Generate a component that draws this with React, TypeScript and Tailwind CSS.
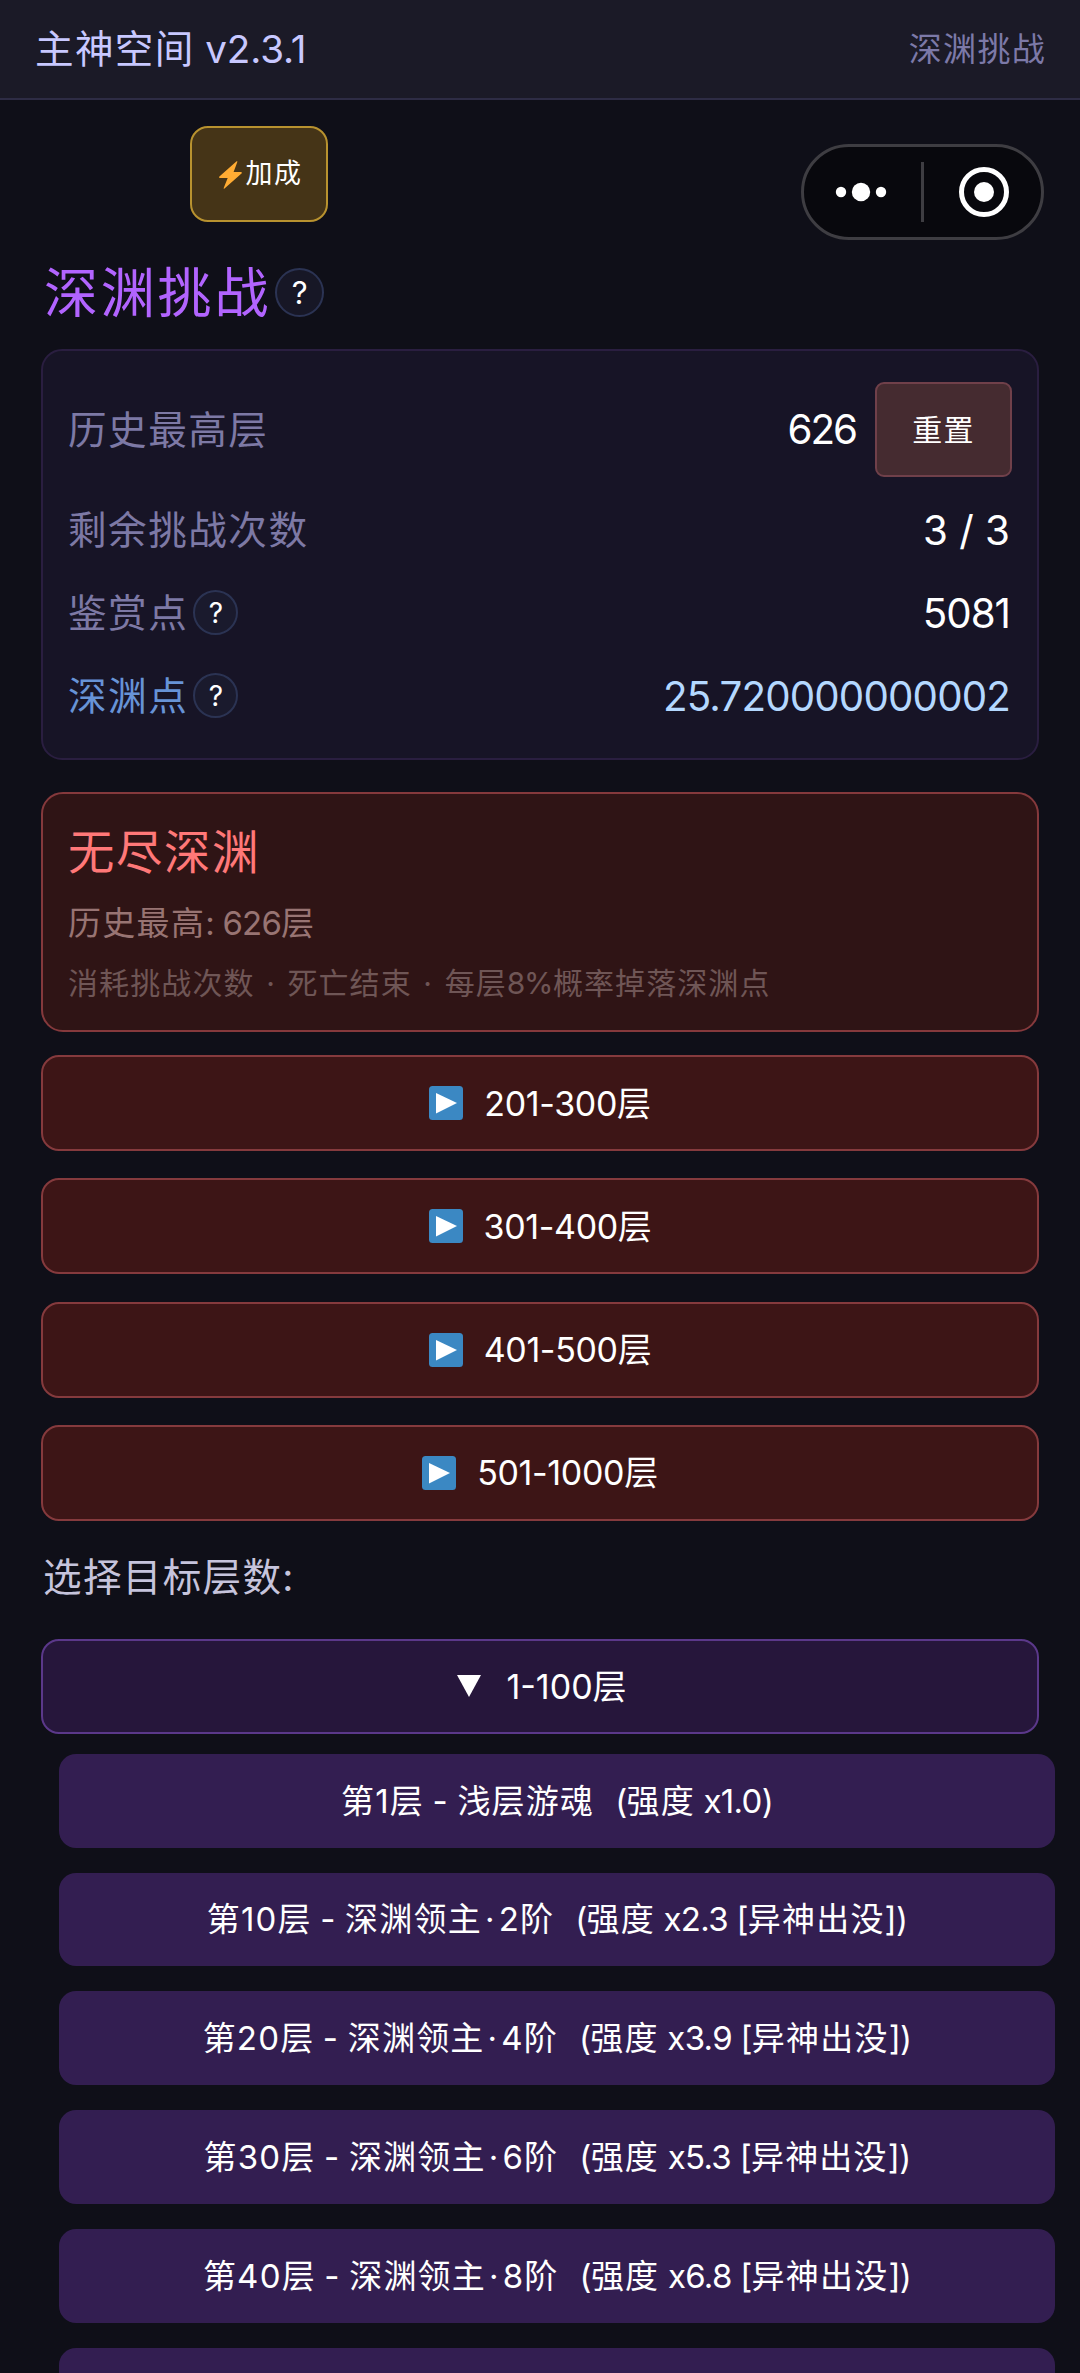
import type { ReactNode } from "react";

const endlessRanges = ["201-300", "301-400", "401-500", "501-1000"];

const floors = [
  { floor: "1", boss: "浅层游魂", rank: "", power: "x1.0", event: "" },
  { floor: "10", boss: "深渊领主", rank: "2阶", power: "x2.3", event: "异神出没" },
  { floor: "20", boss: "深渊领主", rank: "4阶", power: "x3.9", event: "异神出没" },
  { floor: "30", boss: "深渊领主", rank: "6阶", power: "x5.3", event: "异神出没" },
  { floor: "40", boss: "深渊领主", rank: "8阶", power: "x6.8", event: "异神出没" },
];

function Help() {
  return (
    <button className="ml-[5px] flex size-[45px] items-center justify-center rounded-full border-2 border-[#2b3353] bg-[#1a1a2d] pl-[2px] text-[28px] leading-none text-white">
      ?
    </button>
  );
}

type StatRowProps = { label: string; children: ReactNode; help?: boolean; tone?: string };

function StatRow({ label, children, help, tone = "text-white" }: StatRowProps) {
  return (
    <div className="flex h-[60px] items-center justify-between">
      <div className="flex items-center text-[38.6px] tracking-[1.5px]">
        <span className="pt-px">{label}</span>
        {help && <Help />}
      </div>
      <div className={`pt-[2px] pr-[2px] text-[40.3px] ${tone}`}>{children}</div>
    </div>
  );
}

function Bolt() {
  return (
    <svg viewBox="0 0 23 28" className="h-[28px] w-[23px]" fill="#ffac33">
      <path d="M17.6 0.3c.5-.4 1 0 .8.5L14.6 11h7.3c1 0 1.300 .9.6 1.600L5.500 27.500c-.6.5-1.100.1-.8-.5L8.700 17H1c-1 0-1.300-.9-.6-1.600z" />
    </svg>
  );
}

function PlayIcon() {
  return (
    <svg viewBox="0 0 34 34" className="size-[34px]">
      <rect width="34" height="34" rx="3.500" fill="#3b88c3" />
      <path d="M7 7l21 10L7 27.500z" fill="#fff" />
    </svg>
  );
}

function Capsule() {
  return (
    <div className="absolute top-[144px] left-[801px] flex h-24 w-[243px] items-center rounded-full border-[3px] border-[#3e3d42] bg-[#08080d]">
      <svg viewBox="0 0 237 90" className="h-[90px] w-[237px]">
        <circle cx="37" cy="45" r="5.200" fill="#fff" />
        <circle cx="57" cy="45" r="9.200" fill="#fff" />
        <circle cx="77" cy="45" r="5.200" fill="#fff" />
        <rect x="117" y="15" width="3" height="60" fill="#3e3d42" />
        <circle cx="180" cy="45" r="22.500" fill="none" stroke="#fff" strokeWidth="5" />
        <circle cx="180" cy="45" r="10" fill="#fff" />
      </svg>
    </div>
  );
}

export default function App() {
  return (
    <div className="relative h-[2373px] w-[1080px] overflow-hidden bg-[#0f0f18] font-['Inter','Noto_Sans_CJK_SC',sans-serif] whitespace-nowrap">
      <header className="flex h-[100px] items-center justify-between border-b-2 border-[#2e2c45] bg-[#1b1a27] pt-[2px] pr-[34px] pl-[35px]">
        <h1 className="text-[38.6px] tracking-[1.3px] text-[#c8c8ff]">
          主神空间<span className="tracking-[-0.1px]"> v2.3.1</span>
        </h1>
        <span className="text-[33px] tracking-[1.3px] text-[#7c79a8]">深渊挑战</span>
      </header>
      <Capsule />

      <main className="px-[41px]">
        <button className="mt-[26px] ml-[149px] flex h-24 w-[138px] items-center justify-center gap-[3px] rounded-[18px] border-2 border-[#b8922f] bg-[#453417] pt-px pl-1 text-[27px] tracking-[1.6px] text-white">
          <Bolt />
          <span>加成</span>
        </button>

        <div className="mt-[42px] flex h-14 items-center pl-[3px]">
          <h2 className="pt-[4px] text-[54px] leading-none tracking-[2.8px] text-[#b264ff]">深渊挑战</h2>
          <button className="ml-[4px] flex size-[49px] items-center justify-center rounded-full border-2 border-[#2b3353] bg-[#171726] text-[31px] leading-none text-white">
            ?
          </button>
        </div>

        <section className="mt-[29px] flex h-[411px] flex-col gap-[23px] rounded-[21px] border-2 border-[#2a1e40] bg-[#171426] px-[25px] pt-[31px] text-[#7d79a5]">
          <div className="flex h-[95px] items-center justify-between">
            <span className="pt-[2px] text-[38.6px] tracking-[1.5px]">历史最高层</span>
            <div className="flex items-center gap-[19px]">
              <span className="pt-[2px] text-[40.3px] tracking-[-2px] text-white">626</span>
              <button className="h-[95px] w-[137px] rounded-[9px] border-2 border-[#70404a] bg-[#452b30] pt-px text-[30px] tracking-[1.3px] text-white">
                重置
              </button>
            </div>
          </div>
          <StatRow label="剩余挑战次数">3 / 3</StatRow>
          <StatRow label="鉴赏点" help>
            <span className="tracking-[-1px]">5081</span>
          </StatRow>
          <div className="text-[#6793d6]">
            <StatRow label="深渊点" help tone="text-[#b4d8ff]">
              <span className="tracking-[-0.85px]">25.720000000002</span>
            </StatRow>
          </div>
        </section>

        <section className="mt-8 flex h-[240px] flex-col rounded-[22px] border-2 border-[#85393c] bg-[#2f1415] px-[25px]">
          <h3 className="mt-[30px] h-[56px] text-[46.4px] leading-[56px] tracking-[1.6px] text-[#ff7878]">
            无尽深渊
          </h3>
          <p className="mt-[21px] h-[44px] text-[33px] leading-[44px] tracking-[1.3px] text-[#987473]">
            历史最高<span className="tracking-[-0.8px]">: 626</span>层
          </p>
          <p className="mt-[18px] h-[40px] text-[30px] leading-[40px] tracking-[1.1px] text-[#6f5656]">
            <span className="[word-spacing:2px]">消耗挑战次数 · 死亡结束 · 每层</span>
            <span className="tracking-[-1.5px]">8%</span>
            <span className="ml-px">概率掉落深渊点</span>
          </p>
        </section>

        <div className="mt-[23px] flex flex-col gap-[27.3px]">
          {endlessRanges.map((range) => (
            <button
              key={range}
              className="flex h-24 items-center justify-center gap-[21px] rounded-[18px] border-2 border-[#853a3d] bg-[#3d1516] text-white"
            >
              <PlayIcon />
              <span className="text-[34px] tracking-[-0.35px]">{range}层</span>
            </button>
          ))}
        </div>

        <p className="mt-[28px] h-[56px] pl-[2px] text-[38.6px] leading-[56px] tracking-[1.3px] text-[#c6c4dc]">
          选择目标层数:
        </p>

        <button className="mt-[34px] flex h-[95px] w-full items-center justify-center gap-[25px] rounded-[18px] border-2 border-[#5b388a] bg-[#26163b] pl-[4px] text-white">
          <svg viewBox="0 0 24 22" className="h-[22px] w-6" fill="currentColor">
            <path d="M0 0h24L12 22z" />
          </svg>
          <span className="text-[34px]">1-100层</span>
        </button>

        <ul className="mt-5 -mr-4 ml-[18px] flex flex-col gap-[25px]">
          {floors.map((item) => (
            <li key={item.floor}>
              <button className="flex h-[93.8px] w-full items-center justify-center rounded-[17px] bg-[#331e51] pt-px text-[33px] tracking-[1.2px] text-white">
                <span className="[word-spacing:-2px]">
                  第{item.floor}层 - {item.boss}
                  {item.rank && (
                    <>
                      <span className="mx-[3px]">·</span>
                      {item.rank}
                    </>
                  )}
                </span>
                <span className="ml-[21px] tracking-[-0.7px]">
                  (<span className="tracking-[1.2px]">强度</span> {item.power}
                  {item.event && (
                    <>
                      {" ["}
                      <span className="tracking-[1.2px]">{item.event}</span>]
                    </>
                  )}
                  )
                </span>
              </button>
            </li>
          ))}
          <li className="h-[93.8px] rounded-[17px] bg-[#331e51]" />
        </ul>
      </main>
    </div>
  );
}
